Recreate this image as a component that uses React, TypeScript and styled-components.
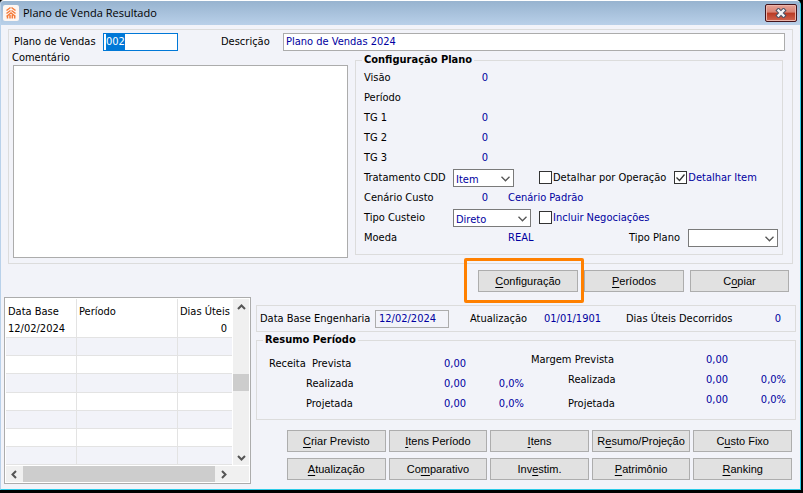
import React, { useEffect, useRef } from 'react';
import styled, { createGlobalStyle } from 'styled-components';

const Global = createGlobalStyle`
  *, *::before, *::after { box-sizing: border-box; }
  html { background: #000; }
  body {
    margin: 0;
    font: 11px/20px "DejaVu Sans Condensed", Tahoma, sans-serif;
    color: #000;
  }
  input, select, textarea, button { font: inherit; margin: 0; }
  ::selection { background: #0078d7; color: #fff; }
`;

const NAVY = '#0000a0';
const LINE = '#dcdcdc';

const Window = styled.div`
  margin: 0 2px 2px 0;
  background: #f2f3f9;
  border: 1px solid;
  border-color: #fff #2ccbe8 #2ccbe8 #b9d1ea;
  border-radius: 4px 5px 0 0;
  overflow: hidden;
`;

const TitleBar = styled.header`
  display: flex;
  align-items: center;
  gap: 4px;
  height: 24px;
  padding: 0 3px 0 2px;
  background: linear-gradient(#97b3cf, #b9d0e9);
`;

const Title = styled.h1`
  flex: 1;
  margin: 0;
  font: 11px/16px "Open Sans", "Segoe UI", sans-serif;
`;

const CloseButton = styled.button`
  display: grid;
  place-items: center;
  width: 32px;
  height: 18px;
  padding: 0;
  border: 1px solid #43141c;
  border-radius: 2px;
  background: linear-gradient(#e6a397 0, #d98374 45%, #b93a24 50%, #d0644f 100%);
  box-shadow: inset 0 0 0 1px #ecb5aa;
`;

const Main = styled.main`
  padding: 4px 0 5px;
`;

const PlanGroup = styled.section`
  margin: 0 7px;
  padding: 3px 7px 8px 3px;
  border: 1px solid ${LINE};
`;

const TopRow = styled.div`
  display: flex;
  align-items: center;
  height: 18px;
`;

const TopLabel = styled.label<{ $width: number }>`
  flex: none;
  width: ${p => p.$width}px;
  padding-left: ${p => (p.$width > 80 ? 2 : 0)}px;
`;

const TextBox = styled.input<{ $active?: boolean }>`
  flex: ${p => (p.$active ? 'none' : 1)};
  width: ${p => (p.$active ? '75px' : 'auto')};
  min-width: 0;
  height: 18px;
  margin-right: ${p => (p.$active ? '43px' : 0)};
  padding: 0 2px;
  border: 1px solid ${p => (p.$active ? '#0078d7' : '#acacac')};
  outline: none;
  background: #fff;
  color: ${NAVY};
`;

const PlanBody = styled.div`
  display: flex;
  gap: 7px;
  margin-right: 2px;
`;

const Comment = styled.div`
  flex: 1;
  display: flex;
  flex-direction: column;
  margin: -3px 0 -3px 1px;
  & > label { margin: 0 0 -3px -1px; }
`;

const CommentBox = styled.textarea`
  flex: 1;
  resize: none;
  border: 1px solid #acacac;
  outline: none;
  background: #fff;
`;

const Group = styled.fieldset`
  min-width: 0;
  margin: 0;
  padding: 0;
  border: 1px solid ${LINE};
`;

const Legend = styled.legend`
  margin-left: 6px;
  padding: 0 2px;
  font-weight: bold;
  line-height: 16px;
`;

const PlanSettings = styled(Group)`
  flex: 0 0 428px;
  margin-top: 1px;
`;

const SettingsBody = styled.div`
  padding: 0 4px 6px 8px;
`;

const SettingRow = styled.div`
  display: flex;
  align-items: center;
  height: 20px;
`;

const SettingLabel = styled.span`
  flex: none;
  width: 89px;
`;

const SettingValue = styled.output`
  width: 35px;
  margin-right: 20px;
  text-align: right;
  color: ${NAVY};
`;

const SettingText = styled.span`
  color: ${NAVY};
`;

const SelectCell = styled.div`
  flex: none;
  width: 86px;
`;

const SelectWrap = styled.span<{ $width: number }>`
  display: block;
  position: relative;
  width: ${p => p.$width}px;
  height: 18px;
  & > svg {
    position: absolute;
    right: 4px;
    top: 7px;
    pointer-events: none;
  }
`;

const SelectBox = styled.select`
  display: block;
  appearance: none;
  width: 100%;
  height: 18px;
  padding: 0 16px 2px 2px;
  border: 1px solid #7a7a7a;
  border-radius: 0;
  background: #fff;
  color: ${NAVY};
`;

const CheckLabel = styled.label<{ $blue?: boolean }>`
  display: flex;
  align-items: center;
  gap: 1px;
  margin-right: 8px;
  color: ${p => (p.$blue ? NAVY : '#000')};
`;

const CheckBox = styled.input`
  && { margin: 0 0 2px; }
  appearance: none;
  flex: none;
  width: 13px;
  height: 13px;
  border: 1px solid #333;
  background: #fff;
  &:checked {
    background: #fff
      url("data:image/svg+xml,%3Csvg xmlns='http://www.w3.org/2000/svg' width='11' height='11'%3E%3Cpath d='M1.5 5.5l3 3 5-6' fill='none' stroke='%23333' stroke-width='1.3'/%3E%3C/svg%3E")
      center no-repeat;
  }
`;

const PlanKind = styled.label`
  display: flex;
  align-items: center;
  gap: 8px;
  margin-left: auto;
`;

const Actions = styled.div`
  display: flex;
  justify-content: flex-end;
  gap: 6px;
  padding: 6px 11px 5px 0;
`;

const Button = styled.button<{ $width?: number }>`
  width: ${p => (p.$width ? `${p.$width}px` : '100%')};
  height: 22px;
  padding: 0;
  border: 1px solid #adadad;
  background: #e1e1e1;
  color: #000;
  font: 11px/18px "Liberation Sans", Arial, sans-serif;
  white-space: nowrap;
  & > u { text-underline-offset: 2px; text-decoration-thickness: 1px; }
`;

const Highlighted = styled.div`
  position: relative;
  &::after {
    content: '';
    position: absolute;
    inset: -12px -6px -11px -14px;
    border: 3px solid #ff8000;
    border-radius: 2px;
    pointer-events: none;
  }
`;

const Lower = styled.div`
  display: grid;
  grid-template-columns: 247px 1fr;
  gap: 5px;
  padding: 0 4px 0 3px;
`;

const GridPanel = styled.section`
  display: grid;
  grid-template-columns: 1fr 16px;
  grid-template-rows: 1fr 16px;
  gap: 1px;
  padding: 1px;
  border: 1px solid #acacac;
  background: #fff;
`;

const DataTable = styled.table`
  width: 100%;
  height: 100%;
  table-layout: fixed;
  border-collapse: separate;
  border-spacing: 0;
  line-height: 17px;
  white-space: nowrap;
  th, td {
    height: 18px;
    padding: 0 2px;
    border-right: 1px solid #e3e3e3;
    border-bottom: 1px solid #e3e3e3;
    font-weight: normal;
    text-align: left;
  }
  th { height: 21px; border-bottom: 0; padding-top: 3px; }
  tbody tr:nth-child(even) td { background: #f2f3f9; }
  th:last-child, td:last-child { text-align: right; border-right: 0; padding-right: 5px; }
`;

const ColWidth = styled.col<{ $w: number }>`
  width: ${p => p.$w}px;
`;

const ScrollTrack = styled.div<{ $vertical?: boolean }>`
  display: flex;
  flex-direction: ${p => (p.$vertical ? 'column' : 'row')};
  grid-column: ${p => (p.$vertical ? 'auto' : '1 / -1')};
  padding-right: ${p => (p.$vertical ? 0 : '17px')};
  background: #f0f0f0;
`;

const ScrollArrow = styled.button`
  display: grid;
  place-items: center;
  flex: none;
  width: 17px;
  height: 16px;
  padding: 0;
  border: 0;
  background: none;
`;

const ScrollSpace = styled.div`
  flex: 1 1 0;
`;

const ScrollThumb = styled.div<{ $long?: boolean }>`
  flex: ${p => (p.$long ? '1' : '0 0 17px')};
  background: #cdcdcd;
`;

const Details = styled.section`
  display: flex;
  flex-direction: column;
  padding: 8px 0 4px;
`;

const InfoBar = styled.div`
  display: flex;
  align-items: center;
  height: 27px;
  padding: 0 14px 0 3px;
  border: 1px solid ${LINE};
`;

const InfoLabel = styled.label<{ $width: number }>`
  flex: none;
  width: ${p => p.$width}px;
  white-space: nowrap;
`;

const InfoDate = styled.input`
  width: 74px;
  height: 18px;
  margin-right: 21px;
  padding: 0 3px;
  border: 1px solid #acacac;
  background: transparent;
  color: ${NAVY};
`;

const InfoValue = styled.output<{ $last?: boolean }>`
  flex: ${p => (p.$last ? '1' : 'none')};
  width: ${p => (p.$last ? 'auto' : '82px')};
  text-align: ${p => (p.$last ? 'right' : 'left')};
  color: ${NAVY};
`;

const SummaryBody = styled.div`
  display: flex;
  justify-content: space-between;
  padding: 0 9px 5px 12px;
`;

const SummaryBlock = styled.div<{ $raised?: boolean }>`
  display: grid;
  grid-template-columns: 197px 58px;
  align-content: start;
  padding-top: ${p => (p.$raised ? 2 : 6)}px;
`;

const SummaryLine = styled.div`
  display: flex;
  justify-content: space-between;
  height: 20px;
`;

const SummaryLabel = styled.span<{ $indent?: boolean; $low?: boolean }>`
  padding-left: ${p => (p.$indent ? 37 : 0)}px;
  padding-top: ${p => (p.$low ? 4 : 0)}px;
  white-space: pre;
`;

const SummaryValue = styled.output`
  text-align: right;
  color: ${NAVY};
`;

const CommandGrid = styled.nav`
  display: grid;
  grid-template-columns: repeat(5, 1fr);
  gap: 6px 3px;
  padding: 10px 4px 0 31px;
`;

const Chevron = () => (
  <svg width="9" height="6" viewBox="0 0 9 6" aria-hidden="true">
    <path d="M0.500 0.800l4 4 4-4" fill="none" stroke="#555" strokeWidth="1.300" />
  </svg>
);

const Arrow = ({ points }: { points: string }) => (
  <svg width="9" height="9" viewBox="0 0 9 9" aria-hidden="true">
    <polyline points={points} fill="none" stroke="#555" strokeWidth="2" />
  </svg>
);

const AppIcon = () => (
  <svg width="16" height="16" viewBox="0 0 16 16" aria-hidden="true">
    <rect width="16" height="16" rx="2" fill="#fdf6f2" />
    <g fill="none" stroke="#f47b3a" strokeWidth="1.500">
      <path d="M3.500 5.500l4-3M8.500 2.500l4 3M3.500 8.500l4-3M8.500 5.500l4 3M3.500 11.500l4.500-3.500 4.500 3.500M4.500 11v2.500M7 10v3.500M9.300 10v3.500M11.700 11v2.500" />
    </g>
  </svg>
);

const CloseIcon = () => (
  <svg width="12" height="10" viewBox="0 0 12 10" aria-hidden="true">
    <path d="M3.500 2.500l5 5M8.500 2.500l-5 5" stroke="#4b5468" strokeWidth="4.400" strokeLinecap="square" />
    <path d="M3.500 2.500l5 5M8.500 2.500l-5 5" stroke="#f4f4f6" strokeWidth="2.400" strokeLinecap="square" />
  </svg>
);

function Mnemonic({ text, at }: { text: string; at: number }) {
  return (
    <>
      {text.slice(0, at)}
      <u>{text[at]}</u>
      {text.slice(at + 1)}
    </>
  );
}

function Dropdown({ id, width, options }: { id: string; width: number; options: string[] }) {
  return (
    <SelectWrap $width={width}>
      <SelectBox id={id}>
        {options.map(o => (
          <option key={o}>{o}</option>
        ))}
      </SelectBox>
      <Chevron />
    </SelectWrap>
  );
}

function SummaryColumn({ title, raised }: { title: string; raised?: boolean }) {
  return (
    <SummaryBlock $raised={raised}>
      <SummaryLine>
        <SummaryLabel>{title}</SummaryLabel>
        <SummaryValue>0,00</SummaryValue>
      </SummaryLine>
      <span />
      <SummaryLine>
        <SummaryLabel $indent>Realizada</SummaryLabel>
        <SummaryValue>0,00</SummaryValue>
      </SummaryLine>
      <SummaryValue>0,0%</SummaryValue>
      <SummaryLine>
        <SummaryLabel $indent $low={raised}>Projetada</SummaryLabel>
        <SummaryValue>0,00</SummaryValue>
      </SummaryLine>
      <SummaryValue>0,0%</SummaryValue>
    </SummaryBlock>
  );
}

const commands: [string, number][] = [
  ['Criar Previsto', 0],
  ['Itens Período', 0],
  ['Itens', 0],
  ['Resumo/Projeção', 1],
  ['Custo Fixo', 1],
  ['Atualização', 0],
  ['Comparativo', 2],
  ['Investim.', 3],
  ['Patrimônio', 0],
  ['Ranking', 0],
];

const plainSettings: [string, string][] = [
  ['Visão', '0'],
  ['Período', ''],
  ['TG 1', '0'],
  ['TG 2', '0'],
  ['TG 3', '0'],
];

const emptyRows = [1, 2, 3, 4, 5, 6, 7];

export default function App() {
  const codeRef = useRef<HTMLInputElement>(null);

  useEffect(() => {
    codeRef.current?.focus();
    codeRef.current?.select();
  }, []);

  return (
    <>
      <Global />
      <Window>
        <TitleBar>
          <AppIcon />
          <Title>Plano de Venda Resultado</Title>
          <CloseButton aria-label="Fechar">
            <CloseIcon />
          </CloseButton>
        </TitleBar>
        <Main>
          <PlanGroup>
            <TopRow>
              <TopLabel htmlFor="code" $width={91}>Plano de Vendas</TopLabel>
              <TextBox id="code" ref={codeRef} defaultValue="002" $active />
              <TopLabel htmlFor="description" $width={62}>Descrição</TopLabel>
              <TextBox id="description" defaultValue="Plano de Vendas 2024" />
            </TopRow>
            <PlanBody>
              <Comment>
                <label htmlFor="comment">Comentário</label>
                <CommentBox id="comment" />
              </Comment>
              <PlanSettings>
                <Legend>Configuração Plano</Legend>
                <SettingsBody>
                  {plainSettings.map(([label, value]) => (
                    <SettingRow key={label}>
                      <SettingLabel>{label}</SettingLabel>
                      <SettingValue>{value}</SettingValue>
                    </SettingRow>
                  ))}
                  <SettingRow>
                    <SettingLabel as="label" htmlFor="cdd">Tratamento CDD</SettingLabel>
                    <SelectCell>
                      <Dropdown id="cdd" width={61} options={['Item']} />
                    </SelectCell>
                    <CheckLabel>
                      <CheckBox type="checkbox" />
                      Detalhar por Operação
                    </CheckLabel>
                    <CheckLabel $blue>
                      <CheckBox type="checkbox" defaultChecked />
                      Detalhar Item
                    </CheckLabel>
                  </SettingRow>
                  <SettingRow>
                    <SettingLabel>Cenário Custo</SettingLabel>
                    <SettingValue>0</SettingValue>
                    <SettingText>Cenário Padrão</SettingText>
                  </SettingRow>
                  <SettingRow>
                    <SettingLabel as="label" htmlFor="costing">Tipo Custeio</SettingLabel>
                    <SelectCell>
                      <Dropdown id="costing" width={78} options={['Direto']} />
                    </SelectCell>
                    <CheckLabel $blue>
                      <CheckBox type="checkbox" />
                      Incluir Negociações
                    </CheckLabel>
                  </SettingRow>
                  <SettingRow>
                    <SettingLabel>Moeda</SettingLabel>
                    <SettingValue />
                    <SettingText>REAL</SettingText>
                    <PlanKind htmlFor="kind">
                      Tipo Plano
                      <Dropdown id="kind" width={90} options={['']} />
                    </PlanKind>
                  </SettingRow>
                </SettingsBody>
              </PlanSettings>
            </PlanBody>
          </PlanGroup>

          <Actions>
            <Highlighted>
              <Button $width={100}><Mnemonic text="Configuração" at={0} /></Button>
            </Highlighted>
            <Button $width={100}><Mnemonic text="Períodos" at={0} /></Button>
            <Button $width={99}><Mnemonic text="Copiar" at={1} /></Button>
          </Actions>

          <Lower>
            <GridPanel>
              <DataTable>
                <colgroup>
                  <ColWidth $w={71} />
                  <ColWidth $w={101} />
                  <col />
                </colgroup>
                <thead>
                  <tr>
                    <th>Data Base</th>
                    <th>Período</th>
                    <th>Dias Úteis</th>
                  </tr>
                </thead>
                <tbody>
                  <tr>
                    <td>12/02/2024</td>
                    <td />
                    <td>0</td>
                  </tr>
                  {emptyRows.map(n => (
                    <tr key={n}>
                      <td />
                      <td />
                      <td />
                    </tr>
                  ))}
                </tbody>
              </DataTable>
              <ScrollTrack $vertical>
                <ScrollArrow aria-label="Acima"><Arrow points="1,6 4.5,2.5 8,6" /></ScrollArrow>
                <ScrollSpace />
                <ScrollThumb />
                <ScrollSpace />
                <ScrollArrow aria-label="Abaixo"><Arrow points="1,3 4.5,6.5 8,3" /></ScrollArrow>
              </ScrollTrack>
              <ScrollTrack>
                <ScrollArrow aria-label="Esquerda"><Arrow points="6,1 2.5,4.5 6,8" /></ScrollArrow>
                <ScrollThumb $long />
                <ScrollArrow aria-label="Direita"><Arrow points="3,1 6.5,4.5 3,8" /></ScrollArrow>
              </ScrollTrack>
            </GridPanel>

            <Details>
              <InfoBar>
                <InfoLabel htmlFor="engineering" $width={115}>Data Base Engenharia</InfoLabel>
                <InfoDate id="engineering" readOnly defaultValue="12/02/2024" />
                <InfoLabel as="span" $width={74}>Atualização</InfoLabel>
                <InfoValue>01/01/1901</InfoValue>
                <InfoLabel as="span" $width={106}>Dias Úteis Decorridos</InfoLabel>
                <InfoValue $last>0</InfoValue>
              </InfoBar>
              <Group>
                <Legend>Resumo Período</Legend>
                <SummaryBody>
                  <SummaryColumn title="Receita  Prevista" />
                  <SummaryColumn title="Margem Prevista" raised />
                </SummaryBody>
              </Group>
              <CommandGrid>
                {commands.map(([text, at]) => (
                  <Button key={text}><Mnemonic text={text} at={at} /></Button>
                ))}
              </CommandGrid>
            </Details>
          </Lower>
        </Main>
      </Window>
    </>
  );
}
